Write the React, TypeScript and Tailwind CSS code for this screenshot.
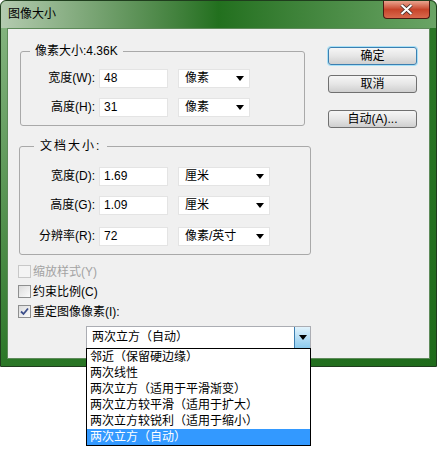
import React from "react";

const Arrow = () => (
    <svg width="8" height="5" viewBox="0 0 8 5" className="shrink-0">
        <path d="M0 0h8L4 5z" fill="#000" />
    </svg>
);

type RowProps = { label: string; value: string; unit: string; labelW: string; selW: string; className?: string };

const Row = ({ label, value, unit, labelW, selW, className = "" }: RowProps) => (
    <div className={"flex items-center " + className}>
        <div className={"text-right leading-[19px] " + labelW}>{label}</div>
        <div className="ml-[4px] h-[19px] w-[69px] bg-white border border-[#e4e4e4] pl-[4px] leading-[17px]">{value}</div>
        <div className={"ml-[10px] h-[19px] bg-white border border-[#e4e4e4] pl-[6px] pr-[5px] flex items-center justify-between " + selW}>
            <span className="leading-[17px]">{unit}</span>
            <Arrow />
        </div>
    </div>
);

const Check = ({ checked = false, disabled = false, label }: { checked?: boolean; disabled?: boolean; label: string }) => (
    <div className={"flex items-center h-[13px] " + (disabled ? "text-[#a3a3a3]" : "text-black")}>
        <div
            className={
                "w-[13px] h-[13px] border flex items-center justify-center " +
                (disabled ? "border-[#c8c8c8] bg-[#f4f4f4]" : "border-[#8e8f8f] bg-gradient-to-br from-[#dcdcdc] to-[#fbfbfb]")
            }
        >
            {checked && (
                <svg width="9" height="9" viewBox="0 0 9 9">
                    <path d="M1 4.5 L3.5 7 L8 1.5" stroke="#3d4f8a" strokeWidth="1.8" fill="none" />
                </svg>
            )}
        </div>
        <span className="ml-[2px] leading-[16px]">{label}</span>
    </div>
);

const Btn = ({ text, primary = false, className = "" }: { text: string; primary?: boolean; className?: string }) => (
    <div
        className={
            "w-[89px] h-[18px] rounded-[3px] border flex items-center justify-center leading-[16px] bg-gradient-to-b from-[#f6f6f6] via-[#e6e6e6] to-[#cfcfcf] " +
            (primary ? "border-[#3c7fb1] shadow-[0_0_0_1px_#a8e1f7]" : "border-[#707070]") +
            " " + className
        }
    >
        {text}
    </div>
);

const items = ["邻近（保留硬边缘）", "两次线性", "两次立方（适用于平滑渐变）", "两次立方较平滑（适用于扩大）", "两次立方较锐利（适用于缩小）", "两次立方（自动）"];

export default function App() {
    return (
        <div className="w-[437px] h-[451px] bg-white text-[12px] text-black font-['Liberation_Sans','Noto_Sans_CJK_SC',sans-serif]">
            <div className="w-[437px] h-[367px] rounded-t-[6px] border border-[#1f3d1d] bg-gradient-to-br from-[#8ab885] via-[#2b7727] to-[#1f6b1b] flex flex-col">
                {/* title bar */}
                <div className="h-[27px] flex items-start justify-between rounded-t-[6px] bg-gradient-to-r from-[#b4cbb0] via-[#22701e] to-[#6aa465]">
                    <div className="ml-[7px] mt-[5px] leading-[16px]">图像大小</div>
                    <div className="mr-[6px] w-[47px] h-[18px] rounded-b-[4px] border border-t-0 border-[#4a1a12] bg-gradient-to-b from-[#e9a38f] via-[#c7442a] to-[#d9684c] flex items-center justify-center">
                        <svg width="13" height="11" viewBox="0 0 13 11">
                            <path d="M1.5 1 L11.5 10 M11.5 1 L1.5 10" stroke="#3a2a25" strokeWidth="3.6" />
                            <path d="M1.5 1 L11.5 10 M11.5 1 L1.5 10" stroke="#fff" strokeWidth="2.2" />
                        </svg>
                    </div>
                </div>
                {/* client */}
                <div className="mx-[6px] h-[331px] border border-[#5d8a59] bg-[#f0f0f0] flex">
                    <div className="pl-[10px] pt-[14px] w-[304px]">
                        <fieldset className="ml-[2px] w-[285px] border border-[#a9a9a9] rounded-[3px] pb-[8px]">
                            <legend className="ml-[9px] px-[5px] leading-[16px]">像素大小:4.36K</legend>
                            <div className="mt-[10px] flex flex-col gap-[10px]">
                                <Row label="宽度(W):" value="48" unit="像素" labelW="w-[74px]" selW="w-[72px]" />
                                <Row label="高度(H):" value="31" unit="像素" labelW="w-[74px]" selW="w-[72px]" />
                            </div>
                        </fieldset>
                        <fieldset className="ml-[1px] mt-[12px] w-[292px] border border-[#a9a9a9] rounded-[3px] pb-[8px]">
                            <legend className="ml-[14px] px-[6px] leading-[16px] tracking-[2px]">文档大小:</legend>
                            <div className="mt-[13px] flex flex-col gap-[10px]">
                                <Row label="宽度(D):" value="1.69" unit="厘米" labelW="w-[75px]" selW="w-[92px]" />
                                <Row label="高度(G):" value="1.09" unit="厘米" labelW="w-[75px]" selW="w-[92px]" />
                                <Row label="分辨率(R):" value="72" unit="像素/英寸" labelW="w-[75px]" selW="w-[92px]" className="mt-[2px]" />
                            </div>
                        </fieldset>
                        <div className="mt-[10px] flex flex-col gap-[7px]">
                            <Check disabled label="缩放样式(Y)" />
                            <Check label="约束比例(C)" />
                            <Check checked label="重定图像像素(I):" />
                        </div>
                        <div className="relative ml-[68px] mt-[8px] w-[225px] h-[23px] border border-[#abadb3] bg-white flex">
                            <div className="flex-1 pl-[5px] leading-[21px]">两次立方（自动）</div>
                            <div className="w-[16px] h-full border-l border-[#3c7fb1] bg-gradient-to-b from-[#e1f3fc] via-[#b6def5] to-[#8ccbee] flex items-center justify-center">
                                <Arrow />
                            </div>
                            <div className="absolute left-[-1px] top-full w-[225px] border border-black bg-white z-10">
                                {items.map((t, i) => (
                                    <div
                                        key={t}
                                        className={"h-[16px] pl-[3px] leading-[16px] " + (i === items.length - 1 ? "bg-[#3399ff] text-white" : "")}
                                    >
                                        {t}
                                    </div>
                                ))}
                            </div>
                        </div>
                    </div>
                    <div className="ml-[16px] pt-[18px] flex flex-col">
                        <Btn text="确定" primary />
                        <Btn text="取消" className="mt-[10px]" />
                        <Btn text="自动(A)..." className="mt-[17px]" />
                    </div>
                </div>
            </div>
        </div>
    );
}
